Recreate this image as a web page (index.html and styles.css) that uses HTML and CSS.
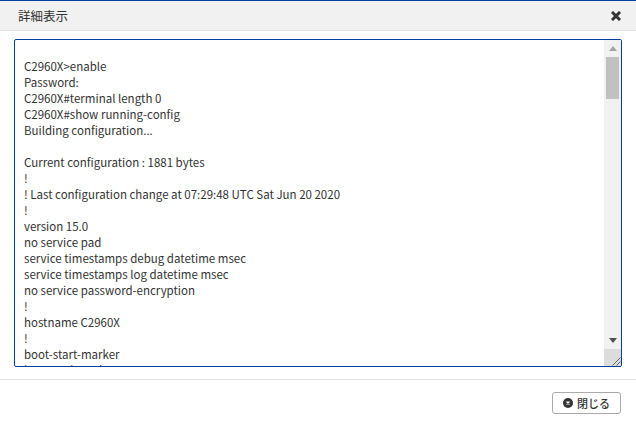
FILE: index.html
```html
<!DOCTYPE html>
<html lang="ja">
<head>
<meta charset="utf-8">
<title>詳細表示</title>
<link rel="stylesheet" href="styles.css">
</head>
<body>
<div class="dialog">
  <header class="dialog-header">
    <span class="dialog-title">詳細表示</span>
    <svg class="close-x" viewBox="0 0 10 10" width="10" height="10" aria-hidden="true"><path d="M2 2 L8 8 M8 2 L2 8" stroke="#333" stroke-width="3" stroke-linecap="square" fill="none"/></svg>
  </header>
  <div class="dialog-body">
    <div class="log-wrap">
      <textarea class="log" readonly>

C2960X&gt;enable
Password:
C2960X#terminal length 0
C2960X#show running-config
Building configuration...

Current configuration : 1881 bytes
!
! Last configuration change at 07:29:48 UTC Sat Jun 20 2020
!
version 15.0
no service pad
service timestamps debug datetime msec
service timestamps log datetime msec
no service password-encryption
!
hostname C2960X
!
boot-start-marker
boot-end-marker
!
no aaa new-model
system mtu routing 1500
!
no ip domain-lookup
!
spanning-tree mode pvst
spanning-tree extend system-id
!
vlan internal allocation policy ascending
!
end
</textarea>
      <div class="scrollbar" aria-hidden="true">
        <div class="sb-button">
          <svg width="8" height="5" viewBox="0 0 8 5"><path d="M4 0 L8 5 L0 5 Z" fill="#a3a3a3"/></svg>
        </div>
        <div class="sb-track"><div class="sb-thumb"></div></div>
        <div class="sb-button">
          <svg width="8" height="5" viewBox="0 0 8 5"><path d="M0 0 L8 0 L4 5 Z" fill="#505050"/></svg>
        </div>
        <div class="sb-corner">
          <svg width="17" height="17" viewBox="0 0 17 17"><path d="M16.5 8.5 L8.5 16.5 M16.5 12.5 L12.5 16.5" stroke="#666" stroke-width="1" fill="none"/></svg>
        </div>
      </div>
    </div>
  </div>
  <footer class="dialog-footer">
    <button class="close-btn" type="button">
      <svg class="close-icon" viewBox="0 0 10 10" width="10" height="10" aria-hidden="true"><circle cx="5" cy="5" r="5" fill="#333"/><path d="M3.5 3.5 L6.5 6.5 M6.5 3.5 L3.5 6.5" stroke="#fff" stroke-width="1.4" fill="none"/></svg>
      <span class="close-label">閉じる</span>
    </button>
  </footer>
</div>
</body>
</html>
```

FILE: styles.css
```css
* {
  box-sizing: border-box;
}
html, body {
  margin: 0;
  padding: 0;
  height: 100%;
  overflow: hidden;
  background: #fff;
}
body {
  font-family: "Noto Sans CJK JP", "Noto Sans", sans-serif;
  font-size: 12px;
  color: #333;
}
.dialog {
  display: flex;
  flex-direction: column;
  height: 426px;
}
.dialog-header {
  display: flex;
  align-items: center;
  justify-content: space-between;
  height: 31px;
  padding: 0 15px 0 18px;
  background: #f1f1f1;
  border-top: 1px solid #004098;
  border-bottom: 1px solid #e0e0e0;
}
.dialog-title {
  font-size: 12.5px;
  line-height: 16px;
}
.close-x {
  display: block;
}
.dialog-body {
  padding: 8px 14px 12px;
  height: 349px;
  border-bottom: 1px solid #e0e0e0;
}
.log-wrap {
  position: relative;
  height: 328px;
}
.log {
  display: block;
  width: 100%;
  height: 100%;
  margin: 0;
  padding: 2px 26px 2px 9px;
  font: inherit;
  font-size: 11.5px;
  line-height: 16px;
  color: #333;
  background: #fff;
  border: 1px solid #004098;
  border-radius: 2px;
  outline: none;
  overflow: hidden;
  resize: none;
  white-space: pre-wrap;
}
.scrollbar {
  position: absolute;
  top: 1px;
  right: 1px;
  bottom: 1px;
  width: 17px;
  display: flex;
  flex-direction: column;
  background: #f1f1f1;
}
.sb-button {
  flex: none;
  height: 17px;
  display: flex;
  align-items: center;
  justify-content: center;
}
.sb-button svg,
.sb-corner svg {
  display: block;
}
.sb-track {
  flex: 1;
  padding: 0 2px;
}
.sb-thumb {
  height: 42px;
  background: #c1c1c1;
}
.sb-corner {
  flex: none;
  height: 17px;
  background: #dcdcdc;
}
.dialog-footer {
  display: flex;
  justify-content: flex-end;
  padding: 12px 15px 0 0;
}
.close-btn {
  display: inline-flex;
  align-items: center;
  justify-content: center;
  gap: 4px;
  width: 69px;
  height: 22px;
  padding: 0;
  font: inherit;
  font-size: 11px;
  color: #333;
  background: #fff;
  border: 1px solid #aaa;
  border-radius: 3px;
}
.close-label {
  font-weight: 500;
}
```
